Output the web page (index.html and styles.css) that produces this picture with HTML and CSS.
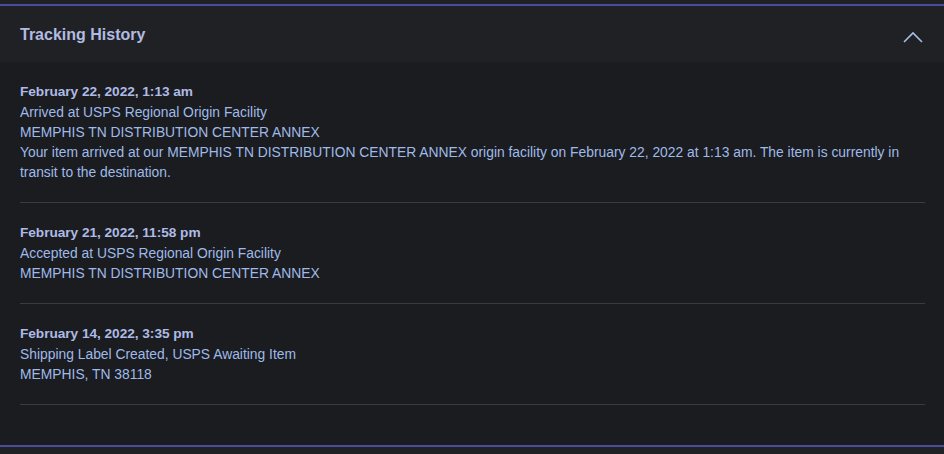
FILE: index.html
```html
<!DOCTYPE html>
<html lang="en">
<head>
  <meta charset="UTF-8">
  <title>Tracking History</title>
  <link rel="stylesheet" href="styles.css">
</head>
<body>
  <section class="panel">
    <div class="panel-header">
      <h2>Tracking History</h2>
      <svg class="chevron" width="20" height="12" viewBox="0 0 20 12">
        <path d="M1 11 L10 2 L19 11" fill="none" stroke="#a6bde8" stroke-width="1.6"/>
      </svg>
    </div>
    <ul class="events">
      <li class="event">
        <div class="date">February 22, 2022, 1:13 am</div>
        <div>Arrived at USPS Regional Origin Facility</div>
        <div>MEMPHIS TN DISTRIBUTION CENTER ANNEX</div>
        <div>Your item arrived at our MEMPHIS TN DISTRIBUTION CENTER ANNEX origin facility on February 22, 2022 at 1:13 am. The item is currently in transit to the destination.</div>
      </li>
      <li class="event">
        <div class="date">February 21, 2022, 11:58 pm</div>
        <div>Accepted at USPS Regional Origin Facility</div>
        <div>MEMPHIS TN DISTRIBUTION CENTER ANNEX</div>
      </li>
      <li class="event">
        <div class="date">February 14, 2022, 3:35 pm</div>
        <div>Shipping Label Created, USPS Awaiting Item</div>
        <div>MEMPHIS, TN 38118</div>
      </li>
    </ul>
  </section>
</body>
</html>
```

FILE: styles.css
```css
body {
  margin: 0;
  padding-top: 4px;
  background-color: #202124;
  font-family: "Liberation Sans", Arial, sans-serif;
  font-size: 13.85px;
  line-height: 20px;
  color: #9fbaea;
  height: 450px;
}
.panel {
  border-top: 2px solid #4b4c9c;
  border-bottom: 2px solid #4b4c9c;
  background-color: #1b1c1f;
}
.panel-header {
  display: flex;
  align-items: center;
  justify-content: space-between;
  height: 56px;
  padding: 0 21px 0 20px;
  background-color: #202124;
}
.panel-header h2 {
  margin: 0;
  padding-top: 2px;
  font-size: 16px;
  font-weight: bold;
  color: #b2bbe2;
}
.chevron {
  display: block;
  margin-top: 6px;
}
.events {
  list-style: none;
  margin: 0;
  padding: 0 19px 40px 20px;
}
.event {
  padding: 20px 0;
  border-bottom: 1px solid #3a3b3e;
}
.date {
  font-weight: bold;
  font-size: 13.7px;
  letter-spacing: -0.05px;
  color: #adbbe6;
}
```
